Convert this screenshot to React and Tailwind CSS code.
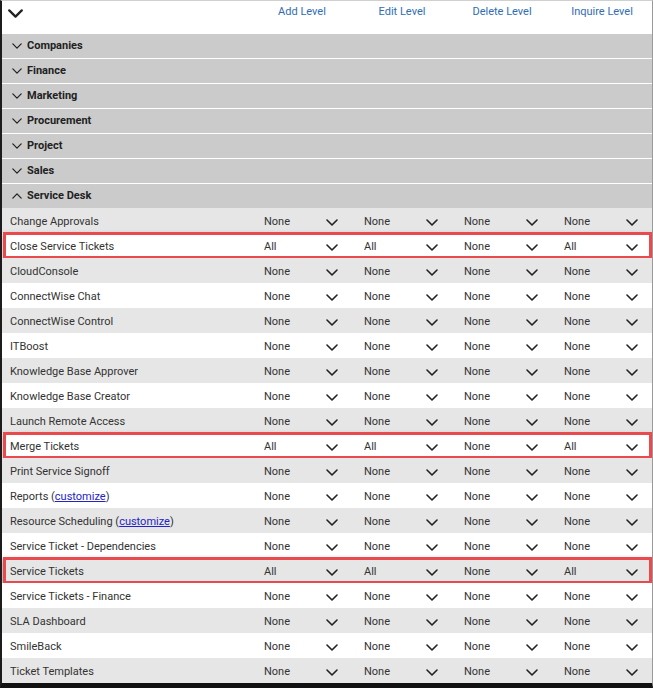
import React from "react";

const groups = ["Companies", "Finance", "Marketing", "Procurement", "Project", "Sales"];

const rows = [
  ["Change Approvals"],
  ["Close Service Tickets", ["All", "All", "None", "All"], true],
  ["CloudConsole"],
  ["ConnectWise Chat"],
  ["ConnectWise Control"],
  ["ITBoost"],
  ["Knowledge Base Approver"],
  ["Knowledge Base Creator"],
  ["Launch Remote Access"],
  ["Merge Tickets", ["All", "All", "None", "All"], true],
  ["Print Service Signoff"],
  ["Reports", null, false, true],
  ["Resource Scheduling", null, false, true],
  ["Service Ticket - Dependencies"],
  ["Service Tickets", ["All", "All", "None", "All"], true],
  ["Service Tickets - Finance"],
  ["SLA Dashboard"],
  ["SmileBack"],
  ["Ticket Templates"],
];

function Chev({ className = "", up = false, w = 12, h = 7, sw = 1.6 }) {
  return (
    <svg width={w} height={h} viewBox="0 0 12 7" className={className} fill="none" stroke="currentColor" strokeWidth={sw} strokeLinecap="round" strokeLinejoin="round">
      {up ? <path d="M1 6 L6 1 L11 6" /> : <path d="M1 1 L6 6 L11 1" />}
    </svg>
  );
}

export default function App() {
  return (
    <div
      className="w-[653px] h-[688px] overflow-hidden bg-white border-l-2 border-l-[#1c1c1c] border-r border-r-[#9a9a9a] border-t border-t-[#d0d0d0] border-b-[5px] border-b-[#111]"
      style={{ fontFamily: "Roboto, 'Liberation Sans', sans-serif" }}
    >
      <div className="grid grid-cols-[250px_repeat(4,1fr)] h-[32px] bg-white text-[11px] text-[#2f6db5]">
        <div className="pl-[6px] pt-[8px] text-[#222]">
          <Chev w={15} h={9} sw={1.8} />
        </div>
        {["Add Level", "Edit Level", "Delete Level", "Inquire Level"].map((t) => (
          <div key={t} className="text-center pt-[3px]">{t}</div>
        ))}
      </div>
      {groups.map((g) => (
        <div key={g} className="h-[25px] bg-[#cbcbcb] border-t border-white flex items-center pl-[10px] text-[11px] font-bold text-[#222]">
          <Chev w={10} h={6} sw={1.5} className="mr-[5px]" />
          {g}
        </div>
      ))}
      <div className="h-[25px] bg-[#cbcbcb] border-t border-white flex items-center pl-[10px] text-[11px] font-bold text-[#222]">
        <Chev up w={10} h={6} sw={1.5} className="mr-[5px]" />
        Service Desk
      </div>
      {rows.map(([name, vals, hl, link], i) => (
        <div
          key={name}
          className={`relative grid grid-cols-[250px_repeat(4,1fr)] h-[25px] items-center pt-[4px] text-[11px] text-[#333] ${i % 2 === 0 ? "bg-[#e6e6e6]" : "bg-white"}`}
        >
          <div className="pl-[8px]">
            {name}
            {link && (
              <>
                {" ("}
                <span className="text-[#2323c8] underline">customize</span>
                {")"}
              </>
            )}
          </div>
          {(vals || ["None", "None", "None", "None"]).map((v, j) => (
            <div key={j} className="flex items-center justify-between pl-[12px] pr-[14px]">
              <span>{v}</span>
              <Chev className="text-[#222]" w={12} h={7} sw={1.6} />
            </div>
          ))}
          {hl && (
            <div className="absolute left-[1px] right-0 top-[-1px] bottom-[-1px] border-[3px] border-[#e84a4d] shadow-[0_3px_5px_rgba(0,0,0,0.4)] pointer-events-none" />
          )}
        </div>
      ))}
    </div>
  );
}
